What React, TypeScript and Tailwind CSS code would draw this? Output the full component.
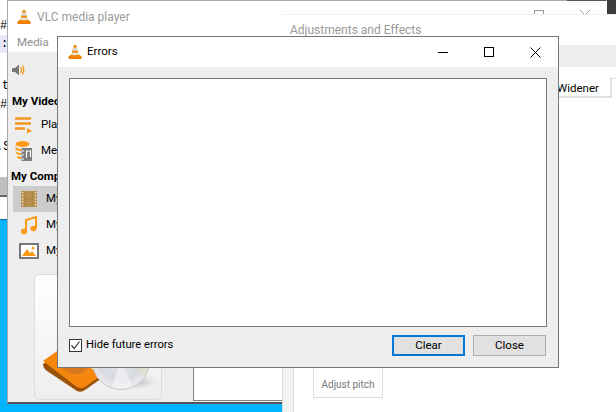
import type { ReactNode } from 'react';

const ui = 'font-["Roboto",sans-serif]';

function Cone({ size = 16 }: { size?: number }) {
  return (
    <svg width={size} height={size} viewBox="0 0 16 16" className="shrink-0">
      <path d="M1 13.2 L3.4 11 H12.6 L15 13.2 L14 15 H2 Z" fill="#f07d00" />
      <path d="M6.8 1 H9.2 L12 12.4 Q8 14 4 12.4 Z" fill="#f58a0b" />
      <path d="M6.3 3.6 H9.7 L10.4 6.8 H5.6 Z" fill="#d9d9d9" />
      <path d="M5.1 8.8 H10.9 L11.4 10.6 Q8 11.6 4.7 10.6 Z" fill="#e6e6e6" />
    </svg>
  );
}

function SideRow({ icon, label, selected }: { icon: ReactNode; label: string; selected?: boolean }) {
  return (
    <div className={`flex items-center h-[26px] ml-[5px] ${selected ? 'bg-[#cccccc]' : ''}`}>
      <div className="w-[33px] flex justify-center shrink-0 -translate-x-[1px]">{icon}</div>
      <span className="text-[11.5px] text-black">{label}</span>
    </div>
  );
}

function VlcWindow() {
  return (
    <div className="absolute left-[7px] top-0 w-[600px] h-[404px] bg-white border-l border-t border-[#a9a9a9] border-b-2 border-b-[#555555] flex flex-col">
      <div className="flex items-center h-[31px] pl-[8px] gap-[5px] shrink-0">
        <Cone />
        <span className="text-[12px] text-[#9a9a9a]">VLC media player</span>
      </div>
      <div className="h-[20px] pl-[9px] text-[11.5px] text-[#8f8f8f] shrink-0 leading-[20px]">Media</div>
      <div className="flex-1 bg-[#eeeeee] relative flex">
        <div className="w-[185px] shrink-0 flex flex-col">
          <div className="h-[33px] pl-[4px] pt-[11px]">
            <svg width="13" height="14" viewBox="0 0 13 14">
              <path d="M0 5 H3 L7 1.5 V12.5 L3 9 H0 Z" fill="#777777" />
              <path d="M8.5 4 Q10.5 7 8.5 10 M10.5 2.5 Q13 7 10.5 11.5" stroke="#f39416" strokeWidth="1.3" fill="none" />
            </svg>
          </div>
          <div className="h-[25px] pl-[4px] pt-[7px] text-[11.5px] font-bold text-black leading-[18px]">My Videos</div>
          <div className="flex items-center h-[27px] pt-[1px] mt-[1px]">
            <div className="w-[33px] pl-[7px] shrink-0">
              <svg width="18" height="17" viewBox="0 0 18 17">
                <path d="M0 1.5 H16 M0 6.5 H16 M0 11.5 H10" stroke="#f7941d" strokeWidth="2.4" />
                <path d="M12 11 L17 14 L12 16.5 Z" fill="#f7941d" />
              </svg>
            </div>
            <span className="text-[11.5px] text-black">Playlist</span>
          </div>
          <div className="flex items-center h-[25px]">
            <div className="w-[33px] pl-[7px] shrink-0">
              <svg width="18" height="20" viewBox="0 0 18 20">
                <ellipse cx="7.5" cy="3" rx="7" ry="3" fill="#ff9a16" />
                <path d="M0.5 6 Q3 8 6 8 V10 Q3 10 0.5 8.5 Z M0.5 10.5 Q3 12 6 12 V14 Q3 14 1 12.5 Z M2 15 Q4 16 6 16 V18 Q4 18 2 17 Z" fill="#ff9a16" />
                <rect x="6.5" y="7" width="10.5" height="13" fill="#7d7d7d" />
                <path d="M8 9 V11 M8 13 V15 M8 17 V19" stroke="#ddd" strokeWidth="1.4" />
                <path d="M11.5 17 V10 H15.5 V16" stroke="#fff" strokeWidth="1.2" fill="none" />
              </svg>
            </div>
            <span className="text-[11.5px] text-black">Media Library</span>
          </div>
          <div className="h-[23px] pl-[3px] pt-[4px] text-[11.5px] font-bold text-black leading-[18px]">My Computer</div>
          <SideRow
            selected
            label="My Videos"
            icon={
              <svg width="16" height="16" viewBox="0 0 16 16">
                <rect width="16" height="16" fill="#b8914f" />
                <path d="M1.5 1 V15 M14.5 1 V15" stroke="#e3d6ba" strokeWidth="1.6" strokeDasharray="1.6 1.4" />
                <path d="M4 0 V16 M12 0 V16 M4 8 H12" stroke="#a67f3e" strokeWidth="0.8" />
              </svg>
            }
          />
          <SideRow
            label="My Music"
            icon={
              <svg width="16" height="19" viewBox="0 0 16 19">
                <path d="M5 15 V4 L15 1 V12" stroke="#fa9a17" strokeWidth="2" fill="none" />
                <ellipse cx="3" cy="15.5" rx="3" ry="3" fill="#fa9a17" />
                <ellipse cx="12.5" cy="12.5" rx="3" ry="2.8" fill="#fa9a17" />
              </svg>
            }
          />
          <SideRow
            label="My Pictures"
            icon={
              <svg width="20" height="16" viewBox="0 0 20 16">
                <rect x="1" y="1" width="18" height="14" fill="#fff" stroke="#777777" strokeWidth="2" />
                <path d="M3 13 L8 6 L11 10 L13 8 L17 13 Z" fill="#fa9a17" />
                <circle cx="14" cy="5" r="1.5" fill="#fa9a17" />
              </svg>
            }
          />
          <div className="mt-[10px] ml-[26px] w-[128px] h-[126px] rounded-[6px] border border-[#dcdcdc] bg-gradient-to-b from-white to-[#eeeeee] overflow-hidden">
            <svg width="128" height="126" viewBox="0 0 128 126">
              <defs>
                <radialGradient id="disc" cx="0.5" cy="0.42" r="0.58">
                  <stop offset="0" stopColor="#e8e8ec" />
                  <stop offset="0.7" stopColor="#d8dae2" />
                  <stop offset="0.93" stopColor="#ebebee" />
                  <stop offset="1" stopColor="#fbfbfb" />
                </radialGradient>
                <radialGradient id="discShadow">
                  <stop offset="0" stopColor="#a8a8a8" />
                  <stop offset="1" stopColor="#eeeeee" stopOpacity="0" />
                </radialGradient>
              </defs>
              <ellipse cx="98" cy="107" rx="30" ry="9" fill="url(#discShadow)" />
              <path d="M8 89 L25 78 L67 103 L50 115 Q46 118 42 116 L12 96 Q8 93 8 89 Z" fill="#9a5208" />
              <path d="M8 86 L25 74 L67 100 L50 112 Q46 114 42 112 Z" fill="#f5870f" />
              <ellipse cx="40" cy="87" rx="15" ry="12" fill="#d9771d" />
              <circle cx="86" cy="86" r="29" fill="url(#disc)" />
              <path d="M86 86 L112 72 A29 29 0 0 1 110 102 Z" fill="#dcd9c2" opacity="0.45" />
              <path d="M86 86 L76 113 A29 29 0 0 0 98 112 Z" fill="#f2f2f6" opacity="0.7" />
              <circle cx="86" cy="86" r="28.5" fill="none" stroke="#c4c4c4" />
            </svg>
          </div>
        </div>
        <div className="self-end mb-[1px] w-[90px] h-[60px] bg-white border-l border-b border-[#808085]" />
      </div>
    </div>
  );
}

function AdjustWindow() {
  return (
    <div className="absolute left-[282px] top-[14px] w-[334px] h-[398px] bg-white flex flex-col border-t border-[#f0f0f0]">
      <div className="h-[23px] flex items-center pl-[8px] pt-[4px] text-[12px] text-[#9a9a9a] leading-[16px] shrink-0 mt-[1px]">
        Adjustments and Effects
      </div>
      <div className="flex-1 flex">
        <div className="w-[12px] bg-[#f3f3f3] border-l border-r border-[#dcdcdc] shrink-0" />
        <div className="flex-1 flex flex-col">
          <div className="h-[6px]" />
          <div className="h-[22px] bg-[#eeeeee] shrink-0" />
          <div className="flex justify-end items-end h-[31px] shrink-0">
            <div className="w-[60px] h-[20px] border-r-2 border-b-2 border-[#e0e0e0] text-[11.5px] text-black flex items-center pl-[5px] pt-[3px]">
              Widener
            </div>
            <div className="w-[4px] h-[20px] border-t border-[#e0e0e0]" />
          </div>
          <div className="flex-1" />
          <div className="ml-[19px] w-[70px] h-[31px] border border-t-0 border-[#dddddd] text-[10px] text-[#777777] flex items-center justify-center pt-[4px] mb-[14px]">
            Adjust pitch
          </div>
        </div>
      </div>
    </div>
  );
}

function ErrorsDialog() {
  return (
    <div className="absolute left-[57px] top-[36px] w-[502px] h-[332px] bg-[#eeeeee] border border-[#777777] flex flex-col">
      <div className="h-[30px] bg-white flex items-center shrink-0">
        <div className="pl-[9px] pr-[4px]">
          <Cone />
        </div>
        <span className="text-[11.5px] text-black flex-1">Errors</span>
        <div className="w-[46px] flex justify-center">
          <svg width="10" height="10" viewBox="0 0 10 10">
            <path d="M0 5.5 H10" stroke="#000" />
          </svg>
        </div>
        <div className="w-[46px] flex justify-center">
          <svg width="10" height="10" viewBox="0 0 10 10">
            <rect x="0.5" y="0.5" width="9" height="9" fill="none" stroke="#000" />
          </svg>
        </div>
        <div className="w-[46px] flex justify-center">
          <svg width="11" height="11" viewBox="0 0 11 11">
            <path d="M0.5 0.5 L10.5 10.5 M10.5 0.5 L0.5 10.5" stroke="#000" />
          </svg>
        </div>
      </div>
      <div className="flex-1 flex flex-col px-[11px] pt-[11px] pb-[12px]">
        <div className="flex-1 bg-white border border-[#777777]" />
        <div className="flex items-center h-[20px] mt-[8px]">
          <div className="w-[13px] h-[13px] border border-[#333333] bg-white flex items-center justify-center">
            <svg width="11" height="11" viewBox="0 0 11 11">
              <path d="M1.5 5.5 L4.2 8.5 L9.5 1.5" stroke="#333" strokeWidth="1.2" fill="none" />
            </svg>
          </div>
          <span className="ml-[4px] pt-[1px] text-[11.2px] text-black flex-1">Hide future errors</span>
          <button className="w-[73px] h-[21px] bg-[#e1e1e1] border-2 border-[#0078d7] pt-[1px] text-[11.5px] text-black flex items-center justify-center">
            Clear
          </button>
          <button className="ml-[8px] mr-[1px] w-[73px] h-[21px] bg-[#e1e1e1] border border-[#adadad] pt-[1px] text-[11.5px] text-black flex items-center justify-center">
            Close
          </button>
        </div>
      </div>
    </div>
  );
}

export default function App() {
  return (
    <div className={`relative w-[616px] h-[412px] overflow-hidden bg-[#00b4ff] ${ui}`}>
      {/* terminal behind */}
      <div className="absolute left-0 top-0 w-[8px] h-[220px] bg-white font-['Liberation_Mono',monospace] text-[12px] leading-[18px] text-black overflow-hidden flex flex-col border-b border-[#0b6fa0] whitespace-nowrap">
        <div className="h-[17px] shrink-0" />
        <div className="h-[18px] shrink-0">#</div>
        <div className="h-[18px] shrink-0 bg-[#e6e6fa] pl-[1px]">:]</div>
        <div className="h-[24px] shrink-0" />
        <div className="h-[19px] shrink-0 pl-[2px]">t</div>
        <div className="h-[18px] shrink-0">#</div>
        <div className="h-[24px] shrink-0" />
        <div className="h-[18px] shrink-0 -ml-[4px]">.S</div>
        <div className="h-[21px] shrink-0" />
        <div className="h-[18px] shrink-0 bg-[#c0c0c0]" />
        <div className="h-[2px] shrink-0 bg-[#666666]" />
      </div>
      {/* top bar right */}
      <div className="absolute right-0 top-0 w-[10px] h-[14px] bg-[#3c3c3c]" />
      <VlcWindow />
      <div className="absolute left-[567px] top-0 w-[39px] h-[1px] bg-[#555555]" />
      <AdjustWindow />
      <div className="absolute left-[534px] top-[10px] w-[10px] h-[4px] border border-b-0 border-[#9a9a9a]" />
      <div className="absolute left-[580px] top-[10px] w-[10px] h-[4px] overflow-hidden">
        <svg width="10" height="5" viewBox="0 0 10 5">
          <path d="M0 0 L5 5 L10 0" stroke="#9a9a9a" fill="none" />
        </svg>
      </div>
      <ErrorsDialog />
    </div>
  );
}
